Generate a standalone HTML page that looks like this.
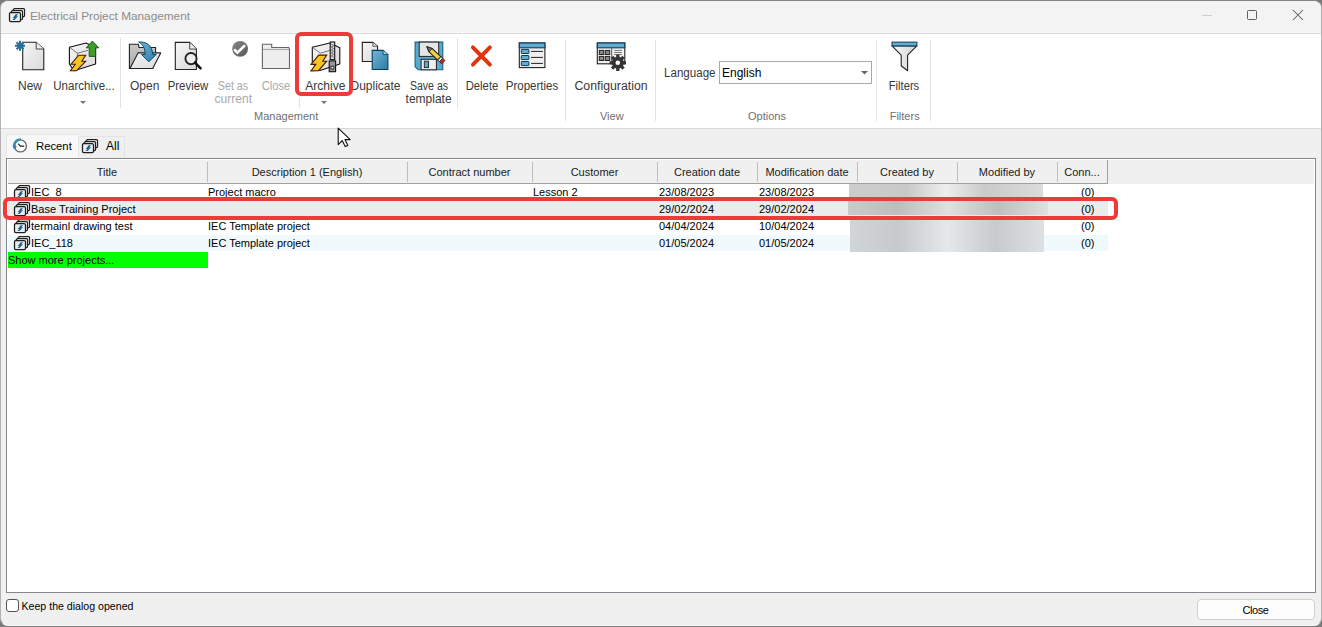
<!DOCTYPE html>
<html><head><meta charset="utf-8">
<style>
*{box-sizing:border-box}
html,body{margin:0;padding:0;width:1322px;height:627px;overflow:hidden;background:#7a7a7a;font-family:"Liberation Sans",sans-serif}
.a{position:absolute}
.t{position:absolute;white-space:nowrap;font-size:12px;line-height:12px;color:#383838}
.c{transform:translateX(-50%)}
#win{position:absolute;left:0;top:0;width:1322px;height:626px;background:#f0f0f0;border:1px solid #b2b2b2;border-top-color:#848484;border-bottom-color:#f6f6f6;border-radius:8px;overflow:hidden}
#title{position:absolute;left:0;top:0;width:1320px;height:31px;background:#f3f3f3}
#ribbon{position:absolute;left:0;top:33px;width:1320px;height:95px;background:#fff}
.sep{position:absolute;width:1px;background:#e2e2e2}
.hd{position:absolute;top:161px;height:23px;font-size:11px;line-height:23px;text-align:center;color:#1a1a1a;white-space:nowrap}
.hs{position:absolute;top:162px;width:1px;height:20px;background:#bdbdbd}
.cell{position:absolute;white-space:nowrap;font-size:11px;line-height:11px;color:#000}
</style></head><body>
<div id="win">
  <div id="title"></div>
  <div class="a" style="left:0;top:31px;width:1320px;height:1px;background:#f9f9f9"></div>
  <div class="a" style="left:0;top:32px;width:1320px;height:1px;background:#d9d9d9"></div>
  <div id="ribbon"></div>
  <div class="a" style="left:0;top:127px;width:1320px;height:1px;background:#d8d8d8"></div>
</div>

<!-- title text -->
<div class="t" style="left:30px;top:10px;color:#8c8c8c;font-size:11.8px">Electrical Project Management</div>

<!-- ribbon labels -->
<div class="t c" style="left:30px;top:80px">New</div>
<div class="t c" style="left:84px;top:80px;transform:translateX(-50%) scaleX(0.96)">Unarchive...</div>
<div class="t c" style="left:144.7px;top:80px">Open</div>
<div class="t c" style="left:188.4px;top:80px;transform:translateX(-50%) scaleX(0.95)">Preview</div>
<div class="t c" style="left:233px;top:80px;color:#a8a8a8;transform:translateX(-50%) scaleX(0.89)">Set as</div>
<div class="t c" style="left:233.3px;top:93px;color:#a8a8a8">current</div>
<div class="t c" style="left:275.8px;top:80px;color:#a8a8a8;transform:translateX(-50%) scaleX(0.93)">Close</div>
<div class="t c" style="left:325.3px;top:80px">Archive</div>
<div class="t c" style="left:375.5px;top:80px">Duplicate</div>
<div class="t c" style="left:429px;top:80px;transform:translateX(-50%) scaleX(0.88)">Save as</div>
<div class="t c" style="left:428.6px;top:93px">template</div>
<div class="t c" style="left:481.7px;top:80px;transform:translateX(-50%) scaleX(0.94)">Delete</div>
<div class="t c" style="left:531.5px;top:80px;transform:translateX(-50%) scaleX(0.96)">Properties</div>
<div class="t c" style="left:611px;top:80px;transform:translateX(-50%) scaleX(1.025)">Configuration</div>
<div class="t c" style="left:903.6px;top:80px;transform:translateX(-50%) scaleX(0.93)">Filters</div>
<div class="t" style="left:664px;top:67px;transform-origin:0 0;transform:scaleX(0.965)">Language</div>

<!-- group labels -->
<div class="t c" style="left:286.2px;top:110px;color:#707070;font-size:11px">Management</div>
<div class="t c" style="left:611.8px;top:110px;color:#707070;font-size:11px">View</div>
<div class="t c" style="left:767px;top:110px;color:#707070;font-size:11px">Options</div>
<div class="t c" style="left:904.7px;top:110px;color:#707070;font-size:11px">Filters</div>

<!-- separators -->
<div class="sep" style="left:120px;top:38px;height:70px"></div>
<div class="sep" style="left:299px;top:98px;height:10px"></div>
<div class="sep" style="left:457px;top:38px;height:70px"></div>
<div class="sep" style="left:565px;top:40px;height:81px"></div>
<div class="sep" style="left:655px;top:40px;height:81px"></div>
<div class="sep" style="left:876px;top:40px;height:81px"></div>
<div class="sep" style="left:930px;top:40px;height:81px"></div>

<!-- combobox -->
<div class="a" style="left:719px;top:61px;width:153px;height:23px;border:1px solid #a9a9a9;background:#fff"></div>
<div class="t" style="left:722px;top:67px;color:#000">English</div>

<!-- tabs -->
<div class="a" style="left:6px;top:134px;width:73px;height:24px;background:#f8f8f8;border:1px solid #e6e6e6;border-bottom:none"></div>
<div class="a" style="left:79px;top:136px;width:46px;height:22px;background:#f0f0f0;border:1px solid #e4e4e4;border-bottom:none;border-left:none"></div>
<div class="t" style="left:36px;top:140px;color:#000;font-size:11.3px">Recent</div>
<div class="t" style="left:106px;top:140px;color:#000">All</div>

<!-- grid -->
<div class="a" style="left:6px;top:158px;width:1310px;height:435px;border:1px solid #828790;background:#fff"></div>
<div class="a" style="left:8px;top:160px;width:1306px;height:24px;background:#f0f0f0"></div>
<div class="a" style="left:8px;top:183px;width:1100px;height:1px;background:#a0a0a0"></div>
<div class="a" style="left:1107px;top:160px;width:1px;height:24px;background:#a0a0a0"></div>

<div class="hd" style="left:7px;width:200px">Title</div>
<div class="hs" style="left:207px"></div>
<div class="hd" style="left:207px;width:200px">Description 1 (English)</div>
<div class="hs" style="left:407px"></div>
<div class="hd" style="left:407px;width:125px">Contract number</div>
<div class="hs" style="left:532px"></div>
<div class="hd" style="left:532px;width:125px">Customer</div>
<div class="hs" style="left:657px"></div>
<div class="hd" style="left:657px;width:100px">Creation date</div>
<div class="hs" style="left:757px"></div>
<div class="hd" style="left:757px;width:100px">Modification date</div>
<div class="hs" style="left:857px"></div>
<div class="hd" style="left:857px;width:100px">Created by</div>
<div class="hs" style="left:957px"></div>
<div class="hd" style="left:957px;width:100px">Modified by</div>
<div class="hs" style="left:1057px"></div>
<div class="hd" style="left:1057px;width:50px">Conn...</div>

<!-- rows -->
<div class="a" style="left:8px;top:201px;width:1100px;height:17px;background:#ececec"></div>
<div class="a" style="left:8px;top:235px;width:1100px;height:16px;background:#f0f9fc"></div>
<div class="a" style="left:8px;top:252px;width:200px;height:16px;background:#00ff00"></div>

<div class="cell" style="left:31px;top:187px">IEC_8</div>
<div class="cell" style="left:208px;top:187px">Project macro</div>
<div class="cell" style="left:533px;top:187px">Lesson 2</div>
<div class="cell" style="left:659px;top:187px">23/08/2023</div>
<div class="cell" style="left:759px;top:187px">23/08/2023</div>
<div class="cell" style="left:1081px;top:187px">(0)</div>

<div class="cell" style="left:31px;top:204px">Base Training Project</div>
<div class="cell" style="left:659px;top:204px">29/02/2024</div>
<div class="cell" style="left:759px;top:204px">29/02/2024</div>
<div class="cell" style="left:1081px;top:204px">(0)</div>

<div class="cell" style="left:31px;top:221px">termainl drawing test</div>
<div class="cell" style="left:208px;top:221px">IEC Template project</div>
<div class="cell" style="left:659px;top:221px">04/04/2024</div>
<div class="cell" style="left:759px;top:221px">10/04/2024</div>
<div class="cell" style="left:1081px;top:221px">(0)</div>

<div class="cell" style="left:31px;top:238px">IEC_118</div>
<div class="cell" style="left:208px;top:238px">IEC Template project</div>
<div class="cell" style="left:659px;top:238px">01/05/2024</div>
<div class="cell" style="left:759px;top:238px">01/05/2024</div>
<div class="cell" style="left:1081px;top:238px">(0)</div>

<div class="cell" style="left:8px;top:255px">Show more projects...</div>

<!-- blurred -->
<div class="a" style="left:849px;top:184px;width:194px;height:14px;background:linear-gradient(90deg,#cdcdcd,#c9c9c9 30%,#eeeeee 50%,#cacaca 70%,#dcdcdc)"></div>
<div class="a" style="left:848px;top:200px;width:200px;height:15px;background:linear-gradient(90deg,#cacaca,#bdbdbd 25%,#e0e0e0 50%,#bebebe 75%,#e0e0e0)"></div>
<div class="a" style="left:850px;top:220px;width:194px;height:32px;background:linear-gradient(90deg,#d2d5d7,#c6cacd 25%,#e4e8ea 50%,#c7cbce 75%,#dde1e3)"></div>


<!-- ICONS -->
<!-- New -->
<svg class="a" style="left:5px;top:35px" width="50" height="40" viewBox="0 0 50 40">
 <defs><linearGradient id="gpage" x1="0" y1="0" x2="1" y2="1"><stop offset="0" stop-color="#f7f7f7"/><stop offset="1" stop-color="#d9d9d9"/></linearGradient>
 <linearGradient id="gblue" x1="0" y1="0" x2="1" y2="1"><stop offset="0" stop-color="#72b6da"/><stop offset="1" stop-color="#2f7aa6"/></linearGradient></defs>
 <path d="M17.7,7.3 H31.2 L38.8,14 V34.8 H17.7 Z" fill="url(#gpage)" stroke="#222" stroke-width="1.1"/>
 <path d="M31.2,7.3 V14 H38.8" fill="#eee" stroke="#333" stroke-width="0.9"/>
 <g stroke="#2a6f98" stroke-width="2" stroke-linecap="butt"><path d="M15,5.8 V15.8 M10,10.8 H20 M11.5,7.3 L18.5,14.3 M18.5,7.3 L11.5,14.3"/></g>
</svg>
<!-- Unarchive -->
<svg class="a" style="left:64px;top:36px" width="40" height="40" viewBox="0 0 40 40">
 <path d="M5.4,11.2 L22,7 L31.6,11.5 V28 L10,34.8 L5.4,28 Z" fill="url(#gpage)" stroke="#111" stroke-width="1.1" stroke-linejoin="round"/>
 <path d="M5.4,11.2 L13.4,17.2 L24,14.4 M13.4,17.2 V34" fill="none" stroke="#555" stroke-width="0.8"/>
 <path d="M14.7,19.2 L21.7,19.2 L17.8,25.2 L21.7,25.2 L12.5,34.8 L6.4,34.8 L11.2,28.2 L7,28.2 Z" fill="#f5c521" stroke="#4a1a00" stroke-width="1.1" stroke-linejoin="miter"/>
 <path d="M28.4,5.1 L34.8,11.8 H31.6 V20.4 H25.2 V11.8 H22.3 Z" fill="#3d9e2c" stroke="#1a5a10" stroke-width="1"/>
</svg>
<!-- Open -->
<svg class="a" style="left:124px;top:36px" width="40" height="40" viewBox="0 0 40 40">
 <defs><linearGradient id="gfold" x1="0" y1="0" x2="0" y2="1"><stop offset="0" stop-color="#c9c9c9"/><stop offset="1" stop-color="#a9a9a9"/></linearGradient></defs>
 <path d="M5.4,8.3 H14.4 L15,11.5 H31.6 V16.5 L28.7,32.5 H5.4 Z" fill="url(#gfold)" stroke="#222" stroke-width="1.1"/>
 <path d="M14,16.9 H36.7 L28.7,32.5 H6 Z" fill="url(#gpage)" stroke="#222" stroke-width="1.1" stroke-linejoin="round"/>
 <path d="M14.7,6 C22,5.5 28.5,9 28.6,18.5 H32.2 L24.9,25.8 L17.5,18.5 H21.2 C21.2,12 18.5,8 14.7,6 Z" fill="url(#gblue)" stroke="#0f4c70" stroke-width="1"/>
</svg>
<!-- Preview -->
<svg class="a" style="left:168px;top:36px" width="40" height="40" viewBox="0 0 40 40">
 <path d="M7.3,6.4 H21.7 L28.4,13.1 V33.5 H7.3 Z" fill="url(#gpage)" stroke="#222" stroke-width="1.1"/>
 <path d="M21.7,6.4 V13.1 H28.4" fill="#eee" stroke="#333" stroke-width="0.9"/>
 <circle cx="23" cy="22.6" r="5.6" fill="#ececec" stroke="#222" stroke-width="1.9"/>
 <path d="M27.2,26.8 L32.6,32.4" stroke="#111" stroke-width="2.6" stroke-linecap="round"/>
</svg>
<!-- Set as current -->
<svg class="a" style="left:220px;top:36px" width="40" height="40" viewBox="0 0 40 40">
 <defs><linearGradient id="gchk" x1="0" y1="0" x2="1" y2="1"><stop offset="0" stop-color="#888"/><stop offset="1" stop-color="#555"/></linearGradient></defs>
 <circle cx="20.1" cy="12.8" r="7.9" fill="url(#gchk)"/>
 <path d="M14.2,13.3 L17.4,16.6 L25,9.3" fill="none" stroke="#fff" stroke-width="2.6" stroke-linejoin="miter"/>
</svg>
<!-- Close folder -->
<svg class="a" style="left:220px;top:36px" width="80" height="40" viewBox="0 0 80 40">
 <path d="M42.4,8.3 H51.7 V11.5 H68.9 L69.5,13.4 V32.5 H42.4 Z" fill="#eeeeee" stroke="#666" stroke-width="1.1"/>
 <path d="M42.9,13.4 H69" stroke="#999" stroke-width="0.9"/>
</svg>
<!-- Archive -->
<svg class="a" style="left:305px;top:36px" width="40" height="40" viewBox="0 0 40 40">
 <path d="M7.3,11.2 L24.9,7 L34.8,11.8 V28.1 L15,34.6 L7.3,27 Z" fill="url(#gpage)" stroke="#111" stroke-width="1.1" stroke-linejoin="round"/>
 <path d="M7.3,11.2 L15.3,17.2 L24.9,14.4" fill="none" stroke="#555" stroke-width="0.8"/>
 <rect x="25.2" y="6" width="4.5" height="17.6" fill="#ddd" stroke="#111" stroke-width="1.1"/>
 <path d="M26.2,8 L28.7,9.5 L26.2,11 L28.7,12.5 L26.2,14 L28.7,15.5 L26.2,17 L28.7,18.5 L26.2,20 L28.7,21.5" fill="none" stroke="#555" stroke-width="0.8"/>
 <rect x="24.2" y="24.9" width="6.4" height="10.8" fill="#999" stroke="#111" stroke-width="1.1"/>
 <rect x="26" y="30.2" width="2.8" height="2.8" fill="#eee" stroke="#111" stroke-width="0.8"/>
 <path d="M13.7,19.1 L21.7,19.1 L17.8,25.2 L21.7,25.2 L13.5,34.6 L6,34.8 L10.8,28.4 L6,28.4 Z" fill="#f5c521" stroke="#4a1a00" stroke-width="1.1"/>
</svg>
<!-- Duplicate -->
<svg class="a" style="left:355px;top:36px" width="40" height="40" viewBox="0 0 40 40">
 <path d="M7.3,6.4 H17.9 L22.6,10.2 V25.5 H7.3 Z" fill="url(#gpage)" stroke="#222" stroke-width="1.1"/>
 <path d="M17.9,6.4 V10.2 H22.6" fill="#eee" stroke="#333" stroke-width="0.8"/>
 <path d="M17.2,14.4 H28.1 L32.9,18.5 V33.5 H17.2 Z" fill="url(#gblue)" stroke="#0a3d5c" stroke-width="1.1"/>
 <path d="M28.1,14.4 V18.5 H32.9" fill="#9ad4ee" stroke="#0a3d5c" stroke-width="0.8"/>
</svg>
<!-- Save as template -->
<svg class="a" style="left:409px;top:36px" width="40" height="40" viewBox="0 0 40 40">
 <path d="M6.1,6.1 H33.8 V33.8 H9.2 L6.1,30.7 Z" fill="#5aaad0" stroke="#1f5f80" stroke-width="1.1"/>
 <rect x="10.2" y="6.1" width="19.5" height="14.3" fill="#e6e6e6" stroke="#222" stroke-width="1"/>
 <rect x="12.1" y="23.3" width="15.3" height="10.5" fill="#eee" stroke="#222" stroke-width="1"/>
 <rect x="15.3" y="25.2" width="4.2" height="6.4" fill="#5aaad0" stroke="#222" stroke-width="0.9"/>
 <g transform="translate(17.9,10.8) rotate(43)">
  <path d="M0,0 L5,-2.3 H17 V2.3 H5 Z" fill="#f2d03a" stroke="#222" stroke-width="1"/>
  <path d="M0,0 L5,-2.3 V2.3 Z" fill="#777" stroke="#222" stroke-width="0.8"/>
  <rect x="17" y="-2.3" width="2.5" height="4.6" fill="#eee" stroke="#222" stroke-width="0.8"/>
  <rect x="19.5" y="-2.3" width="3" height="4.6" fill="#d32a2a" stroke="#222" stroke-width="0.8"/>
 </g>
</svg>
<!-- Delete -->
<svg class="a" style="left:465px;top:36px" width="40" height="40" viewBox="0 0 40 40">
 <path d="M7.9,11.4 L24.9,28.6 M24.9,11.4 L7.9,28.6" stroke="#e2340e" stroke-width="3.9" stroke-linecap="round"/>
</svg>
<!-- Properties -->
<svg class="a" style="left:512px;top:36px" width="40" height="40" viewBox="0 0 40 40">
 <rect x="7.3" y="7" width="25.6" height="24.6" fill="#f0f0f0" stroke="#222" stroke-width="1.1"/>
 <rect x="7.3" y="7" width="25.6" height="4.8" fill="#62acd2" stroke="#0f3c58" stroke-width="1.1"/>
 <g fill="#62acd2" stroke="#0f3c58" stroke-width="1"><rect x="9.3" y="13.4" width="7.6" height="4.1" rx="0.5"/><rect x="9.3" y="19.5" width="7.6" height="4.1" rx="0.5"/><rect x="9.3" y="25.5" width="7.6" height="4.1" rx="0.5"/></g>
 <path d="M19.1,15.4 H30.9 M19.1,21.4 H30.9 M19.1,27.4 H30.9" stroke="#222" stroke-width="1"/>
</svg>
<!-- Configuration -->
<svg class="a" style="left:590px;top:36px" width="40" height="40" viewBox="0 0 40 40">
 <rect x="7.3" y="7" width="27.5" height="20.8" fill="#f2f2f2" stroke="#222" stroke-width="1.1"/>
 <rect x="7.3" y="7" width="27.5" height="4.8" fill="#62acd2" stroke="#0f3c58" stroke-width="1.1"/>
 <path d="M21.7,11.8 V27.8" stroke="#444" stroke-width="0.9"/>
 <g fill="#8a8a8a" stroke="#222" stroke-width="1"><rect x="9.3" y="14.4" width="4.4" height="4.1"/><rect x="15.3" y="14.4" width="4.4" height="4.1"/><rect x="9.3" y="20.4" width="4.4" height="4.1"/><rect x="15.3" y="20.4" width="4.4" height="4.1"/></g>
 <path d="M24.2,14.4 H31.9 M24.2,16.5 H31.9 M24.2,18.5 H31.9" stroke="#555" stroke-width="0.8"/>
 <g transform="translate(27.8,26.8)">
  <path d="M-1.3,-8 H1.3 L1.8,-5.4 L3.9,-4.5 L6.1,-6 L7.9,-4.2 L6.4,-2 L7.2,0.1 L8,0.5 V-0.5" fill="none"/>
  <g fill="#333"><circle r="6"/>
   <rect x="-1.6" y="-8.2" width="3.2" height="3.5"/><rect x="-1.6" y="4.7" width="3.2" height="3.5"/>
   <rect x="-8.2" y="-1.6" width="3.5" height="3.2"/><rect x="4.7" y="-1.6" width="3.5" height="3.2"/>
   <g transform="rotate(45)"><rect x="-1.6" y="-8.2" width="3.2" height="3.5"/><rect x="-1.6" y="4.7" width="3.2" height="3.5"/><rect x="-8.2" y="-1.6" width="3.5" height="3.2"/><rect x="4.7" y="-1.6" width="3.5" height="3.2"/></g>
  </g>
  <circle r="2.3" fill="#fff"/>
 </g>
</svg>
<!-- Filters -->
<svg class="a" style="left:884px;top:36px" width="40" height="40" viewBox="0 0 40 40">
 <defs><linearGradient id="gfun" x1="0" y1="0" x2="1" y2="0"><stop offset="0" stop-color="#fafafa"/><stop offset="1" stop-color="#d0d0d0"/></linearGradient></defs>
 <path d="M8,9.9 H32.9 L23.6,19.1 V34.8 L17.2,29.7 V19.1 Z" fill="url(#gfun)" stroke="#222" stroke-width="1.1" stroke-linejoin="round"/>
 <rect x="8" y="6.1" width="24.9" height="3.8" fill="#62acd2" stroke="#0f3c58" stroke-width="1"/>
</svg>
<!-- Recent clock -->
<svg class="a" style="left:8px;top:134px" width="24" height="24" viewBox="0 0 24 24">
 <circle cx="12.4" cy="11.9" r="6" fill="#fff" stroke="#6e6e6e" stroke-width="1.4"/>
 <path d="M12.8,5.5 A6.4,6.4 0 0 0 6.6,14.2" fill="none" stroke="#3a8dbb" stroke-width="2.6"/>
 <path d="M4.6,11.6 L6.7,15.2 L9,12.4 Z" fill="#2f80b0"/>
 <path d="M10.2,9.6 L12.4,12.1 L16.2,12.1" fill="none" stroke="#222" stroke-width="1.1"/>
</svg>

<svg width="0" height="0" style="position:absolute">
 <defs>
  <symbol id="stk" viewBox="0 0 24 18">
   <path d="M9.5,1.5 H18.5 Q19.5,1.5 19.5,2.5 V8.5 Q19.5,9.5 18.5,9.5 H12 L7.5,3.6 Z" fill="#fff" stroke="#1e1e1e" stroke-width="1.25" stroke-linejoin="round"/>
   <path d="M7.5,3.5 H16.5 Q17.5,3.5 17.5,4.5 V11.5 Q17.5,12.5 16.5,12.5 H10 L5.5,5.6 Z" fill="#fff" stroke="#1e1e1e" stroke-width="1.25" stroke-linejoin="round"/>
   <rect x="4.5" y="5.5" width="11" height="9" rx="1.3" fill="#ececec" stroke="#1e1e1e" stroke-width="1.25"/>
   <path d="M10.6,7.2 H13 L11.6,9.3 H12.9 L9.6,13.1 H7.5 L9.2,10.9 H7.9 Z" fill="#1d6792"/>
  </symbol>
 </defs>
</svg>
<svg class="a" style="left:10px;top:184px" width="24" height="18"><use href="#stk"/></svg>
<svg class="a" style="left:10px;top:201px" width="24" height="18"><use href="#stk"/></svg>
<svg class="a" style="left:10px;top:218px" width="24" height="18"><use href="#stk"/></svg>
<svg class="a" style="left:10px;top:235px" width="24" height="18"><use href="#stk"/></svg>
<svg class="a" style="left:78px;top:138px" width="24" height="18"><use href="#stk"/></svg>
<svg class="a" style="left:5px;top:7px" width="24" height="18"><use href="#stk"/></svg>

<!-- red highlight boxes -->
<div class="a" style="left:295px;top:31.5px;width:58px;height:64.5px;border:4px solid #ef3a3a;border-radius:6px"></div>
<div class="a" style="left:3px;top:196.6px;width:1115px;height:23.8px;border:4px solid #ef3a3a;border-radius:6px"></div>

<!-- bottom -->
<div class="a" style="left:6px;top:599px;width:13px;height:13px;border:1px solid #555;border-radius:3px;background:#fff"></div>
<div class="t" style="left:21.5px;top:601px;color:#000;font-size:10.6px;line-height:11px">Keep the dialog opened</div>
<div class="a" style="left:1197px;top:599px;width:118px;height:21px;border:1px solid #d0d0d0;border-radius:4px;background:#fdfdfd"></div>
<div class="t c" style="left:1255.5px;top:605px;color:#000;font-size:11px;line-height:11px;letter-spacing:-0.4px">Close</div>


<!-- dropdown arrows -->
<svg class="a" style="left:80px;top:101px" width="6" height="4"><path d="M0,0 H6 L3,3 Z" fill="#777"/></svg>
<svg class="a" style="left:321px;top:101px" width="6" height="4"><path d="M0,0 H6 L3,3 Z" fill="#777"/></svg>
<svg class="a" style="left:861px;top:71px" width="7" height="4"><path d="M0,0 H7 L3.5,3.5 Z" fill="#666"/></svg>
<!-- window controls -->
<div class="a" style="left:1202px;top:15px;width:10px;height:1px;background:#c9cfcf"></div>
<div class="a" style="left:1247px;top:10px;width:10px;height:10px;border:1px solid #5f5f5f;border-radius:1.5px"></div>
<svg class="a" style="left:1292px;top:9px" width="12" height="12" viewBox="0 0 12 12"><path d="M1,1 L11,11 M11,1 L1,11" stroke="#5f5f5f" stroke-width="1.05"/></svg>
<!-- cursor -->
<svg class="a" style="left:337px;top:127px" width="16" height="22" viewBox="0 0 16 22"><path d="M1.2,1.2 V17.6 L5.2,13.6 L8.2,19.6 L10.8,18.4 L8,12.6 H13.2 Z" fill="#fff" stroke="#111" stroke-width="1.1" stroke-linejoin="round"/></svg>
</body></html>
